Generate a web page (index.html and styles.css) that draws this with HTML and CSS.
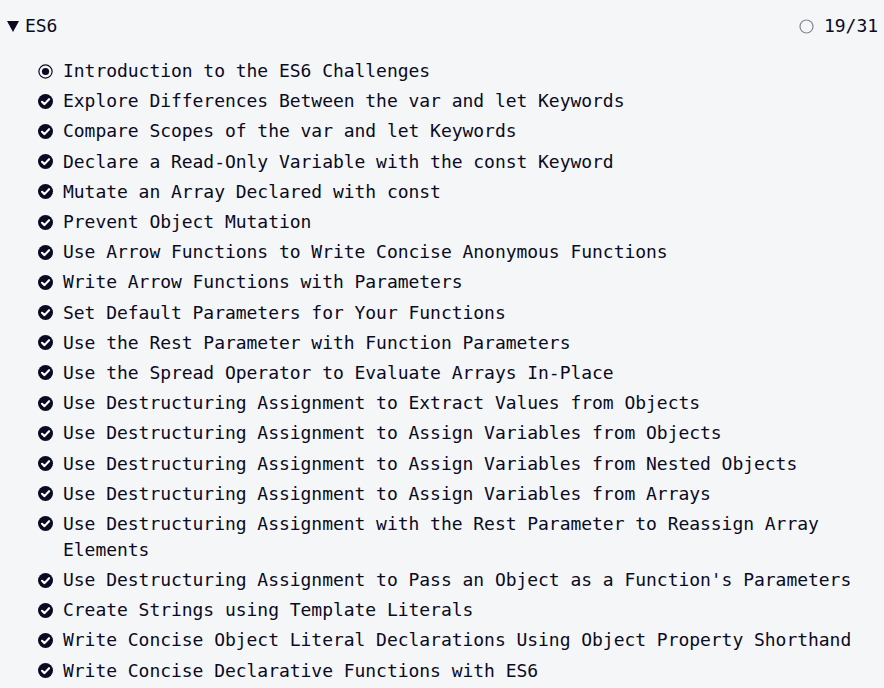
FILE: index.html
```html
<!DOCTYPE html>
<html lang="en">
<head>
<meta charset="utf-8">
<title>ES6</title>
<link rel="stylesheet" href="styles.css">
</head>
<body>
<div class="block">
  <div class="block-header">
    <svg class="caret" width="12" height="11" viewBox="0 0 12 11"><polygon points="0,0 12,0 6,11" fill="#0a0a23"/></svg>
    <span class="block-title">ES6</span>
    <span class="progress">
      <svg class="progress-ring" width="15" height="15" viewBox="0 0 15 15"><circle cx="7.5" cy="7.5" r="6.5" fill="none" stroke="#858591" stroke-width="1.2"/></svg>
      <span class="progress-text">19/31</span>
    </span>
  </div>
  <ul class="challenges">
    <li class="challenge"><span class="icon"><svg width="15" height="15" viewBox="0 0 15 15"><circle cx="7.5" cy="7.5" r="6.6" fill="none" stroke="#0a0a23" stroke-width="1.2"/><circle cx="7.5" cy="7.5" r="3.6" fill="#0a0a23"/></svg></span><span class="label">Introduction to the ES6 Challenges</span></li>
    <li class="challenge"><span class="icon"><svg class="check" width="15" height="15" viewBox="0 0 16 16"><circle cx="8" cy="8" r="8" fill="#0a0a23"/><path d="M4.3 8.3 L6.9 10.8 L11.8 5.6" fill="none" stroke="#fff" stroke-width="2.3" stroke-linecap="round" stroke-linejoin="round"/></svg></span><span class="label">Explore Differences Between the var and let Keywords</span></li>
    <li class="challenge"><span class="icon"><svg class="check" width="15" height="15" viewBox="0 0 16 16"><circle cx="8" cy="8" r="8" fill="#0a0a23"/><path d="M4.3 8.3 L6.9 10.8 L11.8 5.6" fill="none" stroke="#fff" stroke-width="2.3" stroke-linecap="round" stroke-linejoin="round"/></svg></span><span class="label">Compare Scopes of the var and let Keywords</span></li>
    <li class="challenge"><span class="icon"><svg class="check" width="15" height="15" viewBox="0 0 16 16"><circle cx="8" cy="8" r="8" fill="#0a0a23"/><path d="M4.3 8.3 L6.9 10.8 L11.8 5.6" fill="none" stroke="#fff" stroke-width="2.3" stroke-linecap="round" stroke-linejoin="round"/></svg></span><span class="label">Declare a Read-Only Variable with the const Keyword</span></li>
    <li class="challenge"><span class="icon"><svg class="check" width="15" height="15" viewBox="0 0 16 16"><circle cx="8" cy="8" r="8" fill="#0a0a23"/><path d="M4.3 8.3 L6.9 10.8 L11.8 5.6" fill="none" stroke="#fff" stroke-width="2.3" stroke-linecap="round" stroke-linejoin="round"/></svg></span><span class="label">Mutate an Array Declared with const</span></li>
    <li class="challenge"><span class="icon"><svg class="check" width="15" height="15" viewBox="0 0 16 16"><circle cx="8" cy="8" r="8" fill="#0a0a23"/><path d="M4.3 8.3 L6.9 10.8 L11.8 5.6" fill="none" stroke="#fff" stroke-width="2.3" stroke-linecap="round" stroke-linejoin="round"/></svg></span><span class="label">Prevent Object Mutation</span></li>
    <li class="challenge"><span class="icon"><svg class="check" width="15" height="15" viewBox="0 0 16 16"><circle cx="8" cy="8" r="8" fill="#0a0a23"/><path d="M4.3 8.3 L6.9 10.8 L11.8 5.6" fill="none" stroke="#fff" stroke-width="2.3" stroke-linecap="round" stroke-linejoin="round"/></svg></span><span class="label">Use Arrow Functions to Write Concise Anonymous Functions</span></li>
    <li class="challenge"><span class="icon"><svg class="check" width="15" height="15" viewBox="0 0 16 16"><circle cx="8" cy="8" r="8" fill="#0a0a23"/><path d="M4.3 8.3 L6.9 10.8 L11.8 5.6" fill="none" stroke="#fff" stroke-width="2.3" stroke-linecap="round" stroke-linejoin="round"/></svg></span><span class="label">Write Arrow Functions with Parameters</span></li>
    <li class="challenge"><span class="icon"><svg class="check" width="15" height="15" viewBox="0 0 16 16"><circle cx="8" cy="8" r="8" fill="#0a0a23"/><path d="M4.3 8.3 L6.9 10.8 L11.8 5.6" fill="none" stroke="#fff" stroke-width="2.3" stroke-linecap="round" stroke-linejoin="round"/></svg></span><span class="label">Set Default Parameters for Your Functions</span></li>
    <li class="challenge"><span class="icon"><svg class="check" width="15" height="15" viewBox="0 0 16 16"><circle cx="8" cy="8" r="8" fill="#0a0a23"/><path d="M4.3 8.3 L6.9 10.8 L11.8 5.6" fill="none" stroke="#fff" stroke-width="2.3" stroke-linecap="round" stroke-linejoin="round"/></svg></span><span class="label">Use the Rest Parameter with Function Parameters</span></li>
    <li class="challenge"><span class="icon"><svg class="check" width="15" height="15" viewBox="0 0 16 16"><circle cx="8" cy="8" r="8" fill="#0a0a23"/><path d="M4.3 8.3 L6.9 10.8 L11.8 5.6" fill="none" stroke="#fff" stroke-width="2.3" stroke-linecap="round" stroke-linejoin="round"/></svg></span><span class="label">Use the Spread Operator to Evaluate Arrays In-Place</span></li>
    <li class="challenge"><span class="icon"><svg class="check" width="15" height="15" viewBox="0 0 16 16"><circle cx="8" cy="8" r="8" fill="#0a0a23"/><path d="M4.3 8.3 L6.9 10.8 L11.8 5.6" fill="none" stroke="#fff" stroke-width="2.3" stroke-linecap="round" stroke-linejoin="round"/></svg></span><span class="label">Use Destructuring Assignment to Extract Values from Objects</span></li>
    <li class="challenge"><span class="icon"><svg class="check" width="15" height="15" viewBox="0 0 16 16"><circle cx="8" cy="8" r="8" fill="#0a0a23"/><path d="M4.3 8.3 L6.9 10.8 L11.8 5.6" fill="none" stroke="#fff" stroke-width="2.3" stroke-linecap="round" stroke-linejoin="round"/></svg></span><span class="label">Use Destructuring Assignment to Assign Variables from Objects</span></li>
    <li class="challenge"><span class="icon"><svg class="check" width="15" height="15" viewBox="0 0 16 16"><circle cx="8" cy="8" r="8" fill="#0a0a23"/><path d="M4.3 8.3 L6.9 10.8 L11.8 5.6" fill="none" stroke="#fff" stroke-width="2.3" stroke-linecap="round" stroke-linejoin="round"/></svg></span><span class="label">Use Destructuring Assignment to Assign Variables from Nested Objects</span></li>
    <li class="challenge"><span class="icon"><svg class="check" width="15" height="15" viewBox="0 0 16 16"><circle cx="8" cy="8" r="8" fill="#0a0a23"/><path d="M4.3 8.3 L6.9 10.8 L11.8 5.6" fill="none" stroke="#fff" stroke-width="2.3" stroke-linecap="round" stroke-linejoin="round"/></svg></span><span class="label">Use Destructuring Assignment to Assign Variables from Arrays</span></li>
    <li class="challenge"><span class="icon"><svg class="check" width="15" height="15" viewBox="0 0 16 16"><circle cx="8" cy="8" r="8" fill="#0a0a23"/><path d="M4.3 8.3 L6.9 10.8 L11.8 5.6" fill="none" stroke="#fff" stroke-width="2.3" stroke-linecap="round" stroke-linejoin="round"/></svg></span><span class="label">Use Destructuring Assignment with the Rest Parameter to Reassign Array Elements</span></li>
    <li class="challenge"><span class="icon"><svg class="check" width="15" height="15" viewBox="0 0 16 16"><circle cx="8" cy="8" r="8" fill="#0a0a23"/><path d="M4.3 8.3 L6.9 10.8 L11.8 5.6" fill="none" stroke="#fff" stroke-width="2.3" stroke-linecap="round" stroke-linejoin="round"/></svg></span><span class="label">Use Destructuring Assignment to Pass an Object as a Function's Parameters</span></li>
    <li class="challenge"><span class="icon"><svg class="check" width="15" height="15" viewBox="0 0 16 16"><circle cx="8" cy="8" r="8" fill="#0a0a23"/><path d="M4.3 8.3 L6.9 10.8 L11.8 5.6" fill="none" stroke="#fff" stroke-width="2.3" stroke-linecap="round" stroke-linejoin="round"/></svg></span><span class="label">Create Strings using Template Literals</span></li>
    <li class="challenge"><span class="icon"><svg class="check" width="15" height="15" viewBox="0 0 16 16"><circle cx="8" cy="8" r="8" fill="#0a0a23"/><path d="M4.3 8.3 L6.9 10.8 L11.8 5.6" fill="none" stroke="#fff" stroke-width="2.3" stroke-linecap="round" stroke-linejoin="round"/></svg></span><span class="label">Write Concise Object Literal Declarations Using Object Property Shorthand</span></li>
    <li class="challenge"><span class="icon"><svg class="check" width="15" height="15" viewBox="0 0 16 16"><circle cx="8" cy="8" r="8" fill="#0a0a23"/><path d="M4.3 8.3 L6.9 10.8 L11.8 5.6" fill="none" stroke="#fff" stroke-width="2.3" stroke-linecap="round" stroke-linejoin="round"/></svg></span><span class="label">Write Concise Declarative Functions with ES6</span></li>
  </ul>
</div>
</body>
</html>
```

FILE: styles.css
```css
html, body {
  margin: 0;
  padding: 0;
  background: #f5f6f7;
}

body {
  font-family: "DejaVu Sans Mono", "Liberation Mono", monospace;
  font-size: 18px;
  letter-spacing: -0.04px;
  color: #0a0a23;
  overflow: hidden;
}

.block {
  padding: 0 6px 0 7px;
}

.block-header {
  display: flex;
  align-items: center;
  height: 52px;
}

.caret {
  flex: none;
  margin-right: 6px;
}

.block-title {
  flex: 1;
  line-height: 26px;
}

.progress {
  display: flex;
  align-items: center;
  gap: 10px;
  line-height: 26px;
}

.progress-ring {
  display: block;
}

.challenges {
  list-style: none;
  margin: 4px 0 0;
  padding: 0 0 0 31px;
}

.challenge {
  display: flex;
  align-items: flex-start;
  padding: 2.1px 0;
  line-height: 26px;
}

.icon {
  flex: none;
  width: 25px;
  height: 26px;
  display: flex;
  align-items: center;
}

.icon svg {
  display: block;
}

.label {
  flex: 1;
  min-width: 0;
}
```
